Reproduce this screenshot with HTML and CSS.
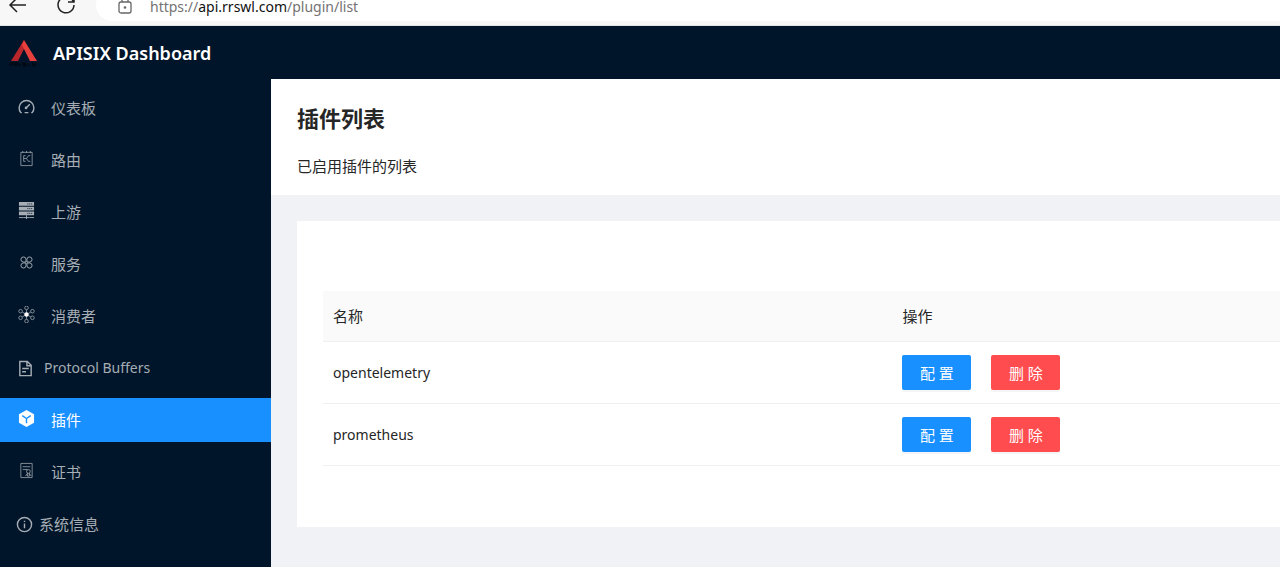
FILE: index.html
```html
<!DOCTYPE html>
<html lang="zh-CN">
<head>
<meta charset="utf-8">
<title>APISIX Dashboard</title>
<link rel="stylesheet" href="styles.css">
</head>
<body>
<div class="toolbar">
  <button class="tool back" aria-label="返回"><svg width="20" height="18" viewBox="0 0 20 18"><path d="M18 9H2M9 2L2 9l7 7"/></svg></button>
  <button class="tool reload" aria-label="刷新"><svg width="20" height="20" viewBox="0 0 20 20"><path d="M17.500 7a8 8 0 1 0 .5 3M18 1v6h-6"/></svg></button>
  <div class="address">
    <svg class="lock" width="14" height="18" viewBox="0 0 14 18"><rect x="1" y="6" width="12" height="11" rx="2"/><path d="M4 6V4a3 3 0 0 1 6 0v2"/><circle cx="7" cy="11.500" r=".7"/></svg>
    <div class="url" role="textbox" aria-label="地址">https://<span class="host">api.rrswl.com</span>/plugin/list</div>
  </div>
</div>
<header class="header">
  <svg class="logo" width="30" height="28" viewBox="0 0 30 28"><path class="logo-left" d="M15 1L2 22h7l6-12z"/><path class="logo-right" d="M15 1l13 21h-7l-8-16z"/><path class="logo-base" d="M1 24h3v3M1 27v-2h3M6 27v-3h3v2H6M11 24v3M17 24h-3v1.500h3V27h-3M20 24v3M23 24l4 3M27 24l-4 3"/></svg>
  <span class="brand">APISIX Dashboard</span>
</header>
<div class="layout">
  <nav class="sidebar">
    <ul class="menu">
      <li><a class="item" href="#"><svg class="icon strong" viewBox="0 0 18 18"><path d="M4 15.500H3a7.800 7.800 0 1 1 12 0h-1M7 15.500h4M8.500 10.500L12.500 6.500"/><circle class="fill" cx="8.500" cy="10.500" r="1.400"/></svg><span>仪表板</span></a></li>
      <li><a class="item" href="#"><svg class="icon thin" viewBox="0 0 18 18"><path d="M3 2.500h12v14H3zM5 1v2M9 1v2M13 1v2M6 6v6M6 9h3l2-3h2M9 9l2 3h2M6 6h2M6 12h2"/></svg><span>路由</span></a></li>
      <li><a class="item" href="#"><svg class="icon" viewBox="0 0 18 18"><path class="fill" d="M1 0h16v4H1zM1 5h16v4H1zM1 10h16v4H1z"/><path d="M1 16.500h5M12 16.500h5M9 14v4M6 16.500h6"/><path class="dots" d="M10 2h1M12 2h1M14 2h1M10 7h1M12 7h1M14 7h1M10 12h1M12 12h1M14 12h1"/></svg><span>上游</span></a></li>
      <li><a class="item" href="#"><svg class="icon" viewBox="0 0 18 18"><path d="M8.500 8.500H5.500A2.700 2.700 0 1 1 8.500 5.500zM9.500 8.500V5.500a2.700 2.700 0 1 1 3 3zM8.500 9.500v3a2.700 2.700 0 1 1-3-3zM9.500 9.500h3a2.700 2.700 0 1 1-3 3z"/></svg><span>服务</span></a></li>
      <li><a class="item" href="#"><svg class="icon thin" viewBox="0 0 18 18"><circle cx="9" cy="2" r="1.900"/><circle cx="9" cy="16" r="1.900"/><circle cx="2.700" cy="5.500" r="1.900"/><circle cx="15.300" cy="5.500" r="1.900"/><circle cx="2.700" cy="12.500" r="1.900"/><circle cx="15.300" cy="12.500" r="1.900"/><path d="M9 4v10M4.500 6.500l9 5M13.500 6.500l-9 5"/><circle class="hub" cx="9" cy="9" r="2.300"/></svg><span>消费者</span></a></li>
      <li><a class="item medium" href="#"><svg class="icon strong" viewBox="0 0 18 18"><path d="M3 1.500h8l4 4V16.500H3zM10.500 1.500V6H15M5.500 9h7M5.500 12.500h4"/></svg><span class="latin">Protocol Buffers</span></a></li>
      <li><a class="item selected" href="#" aria-current="page"><svg class="icon" viewBox="0 0 18 18"><path class="fill" d="M9 0l8 4.500v9L9 18l-8-4.500v-9z"/><path class="cut" d="M4.500 6L9 9l4.500-3M9 9v5"/></svg><span>插件</span></a></li>
      <li><a class="item" href="#"><svg class="icon thin" viewBox="0 0 18 18"><path d="M3 1.500h12v15H3zM5 5h8M5 8h5"/><circle cx="11" cy="10" r="2"/><path d="M10 12l-2 3M12 12l2 3M10 12v3h2v-3"/></svg><span>证书</span></a></li>
      <li><a class="item tight" href="#"><svg class="icon strong" viewBox="0 0 18 18"><circle cx="9" cy="9" r="7.500"/><path d="M9 8v5M9 5v1.300"/></svg><span>系统信息</span></a></li>
    </ul>
  </nav>
  <main class="main">
    <div class="page-head">
      <h1>插件列表</h1>
      <p>已启用插件的列表</p>
    </div>
    <section class="card">
      <table class="plugins">
        <thead><tr><th class="name" scope="col">名称</th><th scope="col">操作</th></tr></thead>
        <tbody>
          <tr><td class="latin">opentelemetry</td><td><div class="actions"><button class="btn primary">配 置</button><button class="btn danger">删 除</button></div></td></tr>
          <tr><td class="latin">prometheus</td><td><div class="actions"><button class="btn primary">配 置</button><button class="btn danger">删 除</button></div></td></tr>
        </tbody>
      </table>
    </section>
  </main>
</div>
</body>
</html>
```
FILE: styles.css
```css
* { box-sizing: border-box; }
body {
  margin: 0;
  min-height: 100vh;
  display: flex;
  flex-direction: column;
  font: 15px/24px "Noto Sans", "Noto Sans CJK SC", sans-serif;
  color: #262626;
  background: #f0f2f5;
}
svg { flex: none; fill: none; stroke: currentColor; }
.latin { font-size: 14px; }

.toolbar {
  height: 26px;
  display: flex;
  align-items: flex-end;
  padding: 0 0 4px 8px;
  background: #f7f7f7;
  border-bottom: 1px solid #e3e4e6;
  overflow: hidden;
}
.tool {
  flex: none;
  display: flex;
  align-items: center;
  justify-content: center;
  height: 32px;
  padding: 0;
  border: 0;
  background: none;
  color: #222;
}
.back { width: 20px; margin-right: 28px; }
.reload { width: 20px; margin-right: 20px; }
.tool svg { stroke-width: 1.5; }
.address {
  flex: 1;
  height: 32px;
  display: flex;
  align-items: center;
  gap: 18px;
  padding-left: 22px;
  background: #fff;
  border-radius: 16px 0 0 16px;
}
.lock { color: #666; stroke-width: 1.3; }
.url { padding-top: 4px; color: #737373; font-size: 14px; line-height: 12px; white-space: nowrap; }
.host { color: #111; }

.header {
  display: flex;
  align-items: center;
  gap: 14px;
  height: 53px;
  padding-left: 9px;
  background: #001529;
}
.logo { stroke: none; }
.logo-left { fill: #b9262c; }
.logo-right { fill: #e8403c; }
.logo-base { stroke: #000a14; stroke-width: 1.5; }
.brand { color: #fff; font-size: 18px; font-weight: 600; }

.layout { flex: 1; display: flex; }
.sidebar { flex: none; width: 271px; background: #001529; }
.menu {
  list-style: none;
  margin: 0;
  padding: 7px 0;
  display: flex;
  flex-direction: column;
  gap: 8px;
}
.item {
  display: flex;
  align-items: center;
  gap: 16px;
  height: 44px;
  padding-left: 18px;
  color: #a6adb4;
  text-decoration: none;
}
.item.medium { gap: 10px; padding-left: 17px; }
.item.tight { gap: 6px; padding-left: 16px; }
.item.selected { color: #fff; background: #1890ff; }
.icon { width: 17px; height: 17px; margin-bottom: 3px; }
.medium .icon, .tight .icon { margin-bottom: 0; }
.icon.strong { stroke-width: 1.5; }
.thin { stroke-width: 0.8; }
.fill { fill: currentColor; stroke: none; }
.dots { stroke: #001529; }
.cut { stroke: #1890ff; stroke-width: 1.5; }
.hub { fill: #fff; stroke: none; }

.main { flex: 1; min-width: 0; }
.page-head { padding: 23px 26px 17px; background: #fff; }
h1 { margin: 0 0 20px; font-size: 22px; line-height: 32px; font-weight: 700; }
.page-head p { margin: 0; }
.card {
  margin: 26px 0 40px 26px;
  padding: 70px 0 61px 26px;
  background: #fff;
}
.plugins {
  width: 100%;
  border-collapse: separate;
  border-spacing: 0;
  table-layout: fixed;
}
.plugins th, .plugins td {
  padding: 13px 10px;
  text-align: left;
  border-bottom: 1px solid #f0f0f0;
}
.plugins th { font-weight: 400; background: #fafafa; }
.plugins .name { width: 59.5%; }
.actions { display: flex; gap: 20px; }
.btn {
  width: 69px;
  height: 35px;
  padding: 0;
  border: 0;
  border-radius: 2px;
  color: #fff;
  font: inherit;
  box-shadow: 0 2px 0 rgba(0, 0, 0, 0.04);
}
.primary { background: #1890ff; }
.danger { background: #ff4d4f; }
```
